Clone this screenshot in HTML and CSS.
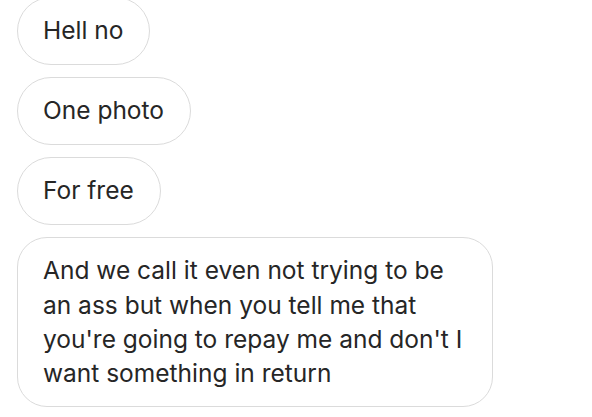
FILE: index.html
```html
<!DOCTYPE html>
<html lang="en">
<head>
  <meta charset="UTF-8" />
  <meta name="viewport" content="width=device-width, initial-scale=1.0" />
  <title>Messages</title>
  <link rel="stylesheet" href="styles.css">
</head>
<body>
  <div class="thread">
    <div class="bubble">Hell no</div>
    <div class="bubble">One photo</div>
    <div class="bubble">For free</div>
    <div class="bubble long">And we call it even not trying to be an ass but when you tell me that you're going to repay me and don't I want something in return</div>
  </div>
</body>
</html>
```

FILE: styles.css
```css
body {
  background-color: #ffffff;
  color: #262626;
  font-family: Inter, 'Liberation Sans', sans-serif;
  margin: 0;
  overflow: hidden;
}

.thread {
  display: flex;
  flex-direction: column;
  align-items: flex-start;
  gap: 12px;
  margin-top: -3px;
  padding-left: 17px;
}

.bubble {
  box-sizing: border-box;
  min-height: 68px;
  padding: 15.3px 26px 15.3px 25px;
  border: 1.5px solid #dbdbdb;
  border-radius: 34px;
  font-size: 24.5px;
  line-height: 34.3px;
  max-width: 476px;
}

.long {
  border-radius: 30px;
  width: 476px;
  padding-right: 20px;
}
```
